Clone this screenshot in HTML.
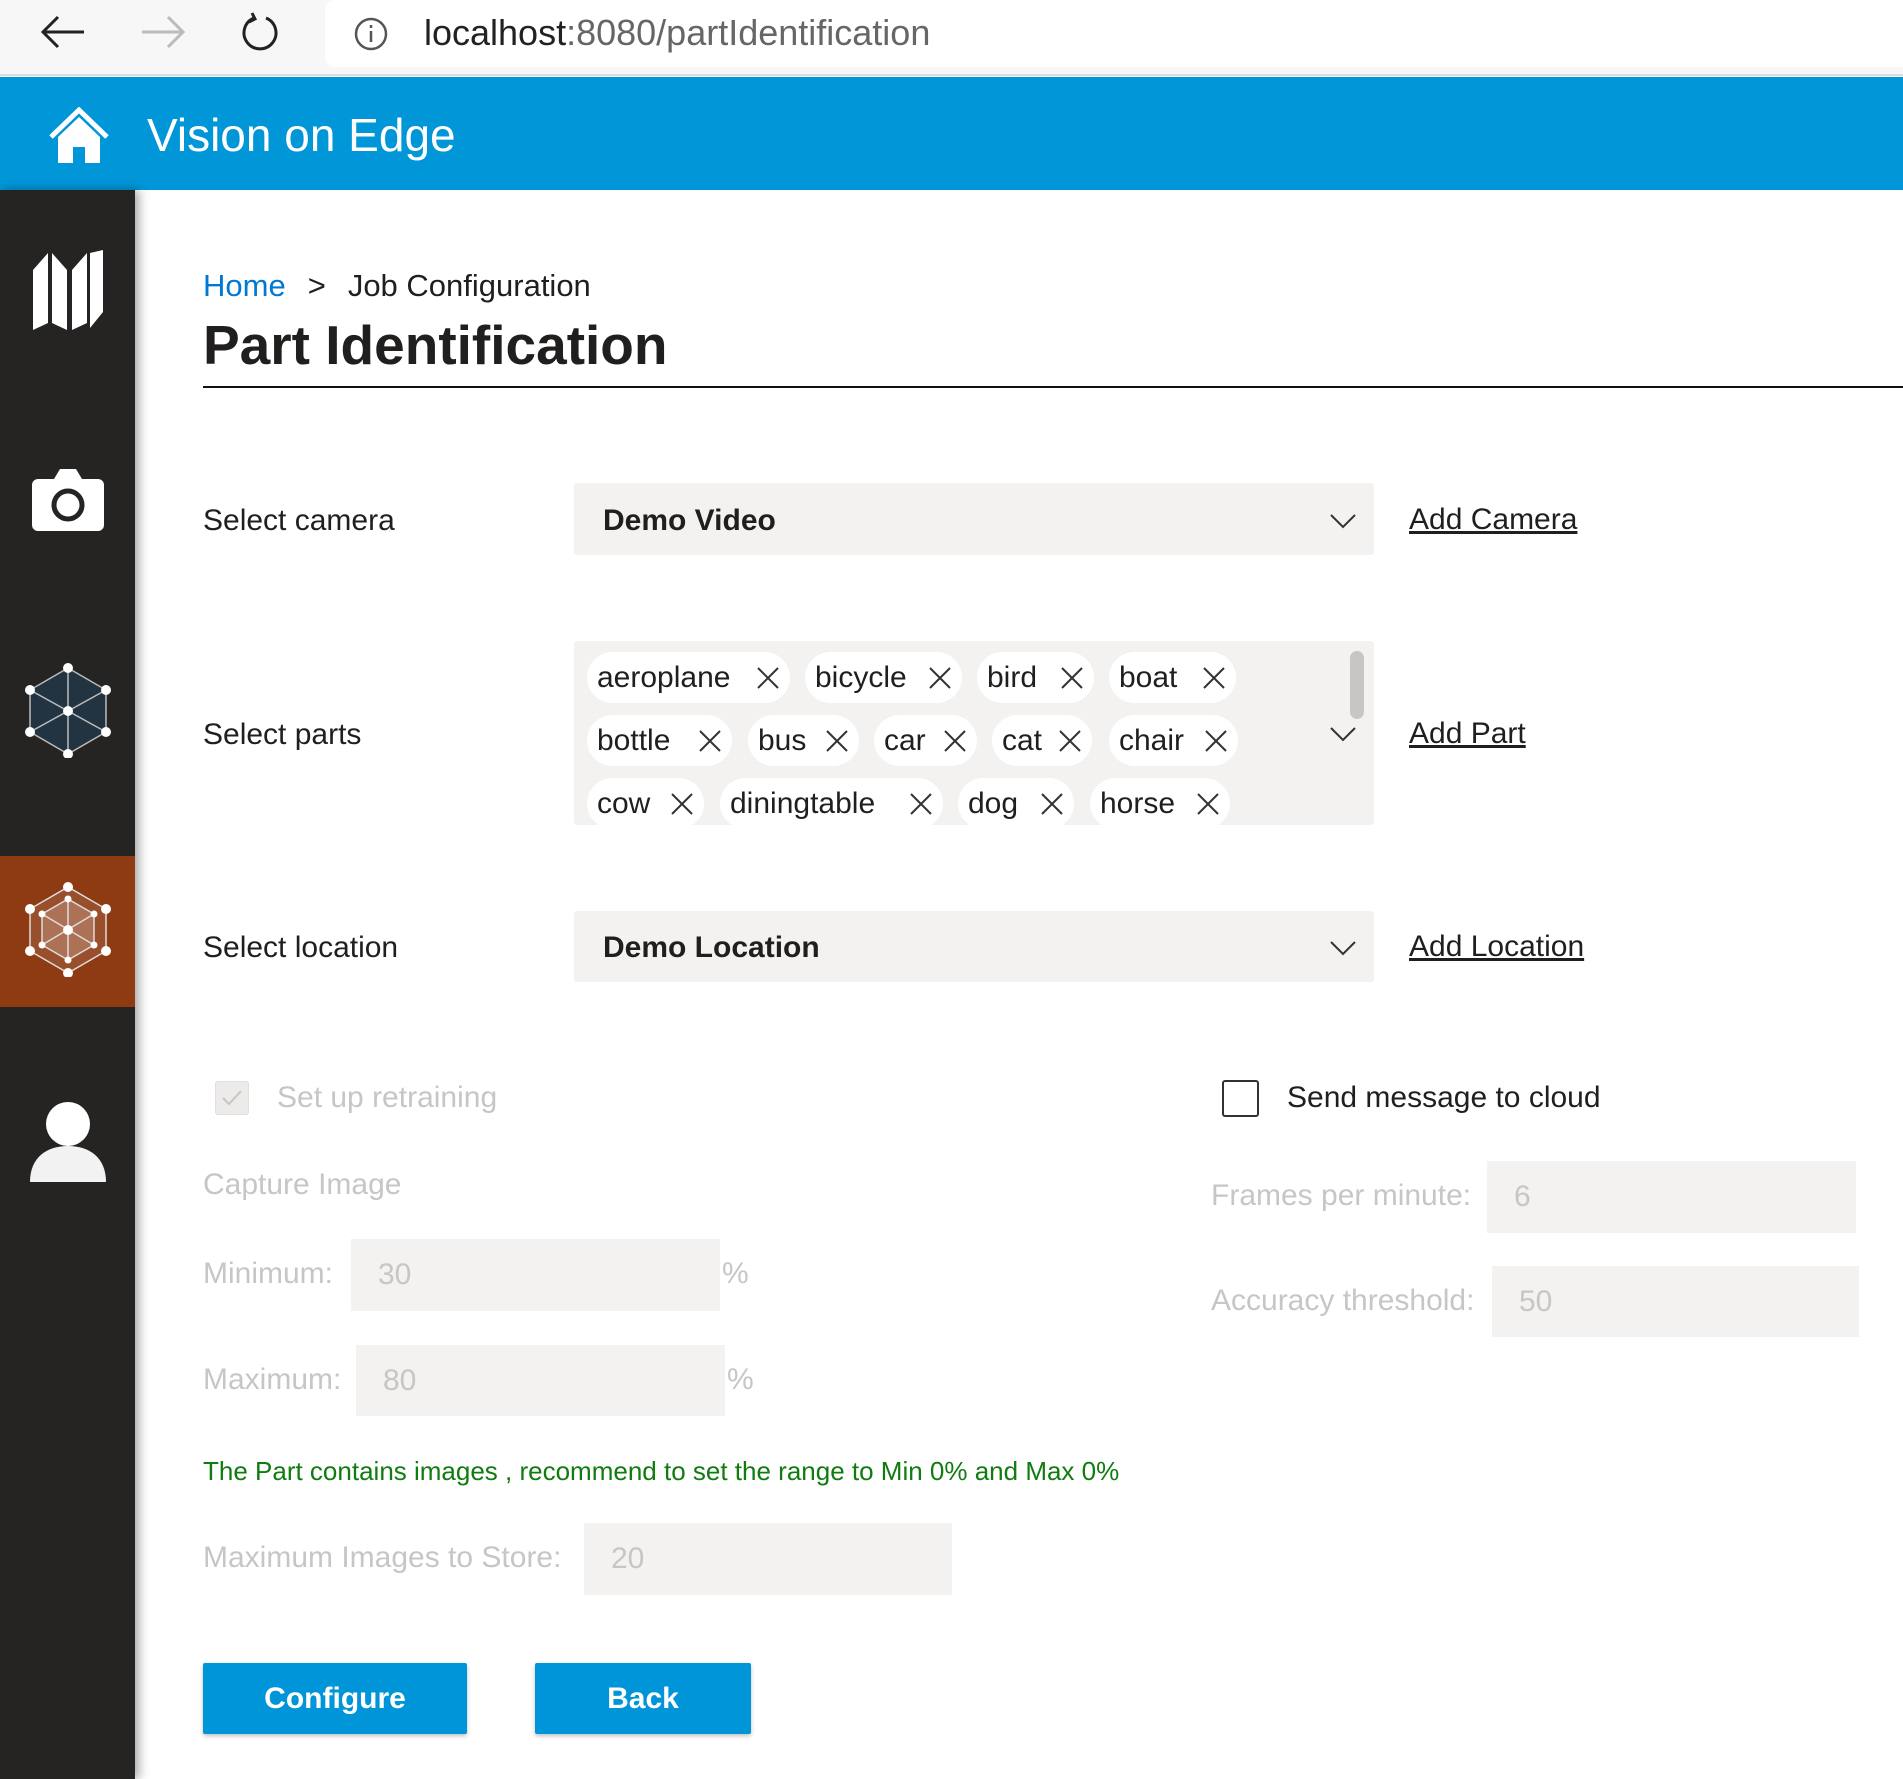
<!DOCTYPE html>
<html><head><meta charset="utf-8"><style>
*{margin:0;padding:0;box-sizing:border-box}
body{width:1903px;height:1779px;overflow:hidden;position:relative;background:#fff;font-family:"Liberation Sans",sans-serif;color:#201f1e}
.abs{position:absolute}
.lbl{position:absolute;font-size:30px;line-height:36px;white-space:nowrap}
.dis{color:#c8c6c4}
.box{position:absolute;background:#f3f2f1;border-radius:3px}
.inp{position:absolute;background:#f3f2f1;font-size:30px;color:#c8c6c4;padding-left:27px;display:flex;align-items:center}
.tag{position:absolute;height:51px;background:#fff;border-radius:26px;display:flex;align-items:center;justify-content:space-between;padding:0 10px 0 10px;font-size:30px;color:#201f1e}
.tag svg{width:24px;height:24px}
.link{position:absolute;font-size:30px;text-decoration:underline;color:#201f1e}
.btn{position:absolute;background:#0094d8;color:#fff;font-weight:bold;font-size:30px;display:flex;align-items:center;justify-content:center;border-radius:2px;box-shadow:0 2px 4px rgba(0,0,0,.25)}
.chev{position:absolute;width:26px;height:16px}
</style></head><body>
<div class="abs" style="left:0;top:0;width:1903px;height:76px;background:#f7f7f7;border-bottom:2px solid #dcdcdc"></div>
<div class="abs" style="left:325px;top:0;width:1578px;height:67px;background:#fff;border-radius:10px 0 0 10px"></div>
<svg class="abs" style="left:40px;top:14px" width="46" height="36" viewBox="0 0 46 36"><path d="M44 18H4M18 3L3 18l15 15" fill="none" stroke="#222" stroke-width="3"/></svg>
<svg class="abs" style="left:140px;top:14px" width="46" height="36" viewBox="0 0 46 36"><path d="M2 18h40M28 3l15 15-15 15" fill="none" stroke="#bbb" stroke-width="3"/></svg>
<svg class="abs" style="left:240px;top:12px" width="40" height="42" viewBox="0 0 40 42"><path d="M14 6A16 16 0 1 0 26 6" fill="none" stroke="#222" stroke-width="3"/><path d="M12 1l3 6-6 3" fill="none" stroke="#222" stroke-width="3"/></svg>
<svg class="abs" style="left:353px;top:16px" width="36" height="36" viewBox="0 0 36 36"><circle cx="18" cy="18" r="15" fill="none" stroke="#555" stroke-width="2.5"/><path d="M18 15v11M18 9v3" stroke="#555" stroke-width="2.5"/></svg>
<div class="abs" style="left:424px;top:12px;font-size:36px;line-height:42px;color:#222">localhost<span style="color:#666">:8080/partIdentification</span></div>
<div class="abs" style="left:0;top:77px;width:1903px;height:113px;background:#0096d8"></div>
<svg class="abs" style="left:48px;top:107px" width="62" height="56" viewBox="0 0 62 56"><path d="M3 30L31 3l28 27" fill="none" stroke="#fff" stroke-width="5"/><path d="M10 30L31 10l21 20v26H37V40H25v16H10z" fill="#fff"/></svg>
<div class="abs" style="left:147px;top:108px;font-size:46px;line-height:54px;color:#fff">Vision on Edge</div>
<div class="abs" style="left:0;top:190px;width:135px;height:1589px;background:#252423;box-shadow:4px 0 10px rgba(0,0,0,.35)"></div>
<div class="abs" style="left:0;top:856px;width:135px;height:151px;background:#8e3b14"></div>
<svg class="abs" style="left:30px;top:250px" width="76" height="82" viewBox="0 0 76 82"><path d="M3 20L18 3v70L3 80z M22 3l15 17v60L22 73z M42 20L57 3v70L42 80z M60 3l13-3v62L60 78z" fill="#fff"/></svg>
<svg class="abs" style="left:30px;top:465px" width="76" height="72" viewBox="0 0 76 72"><path d="M8 14h16l6-10h16l6 10h16a6 6 0 0 1 6 6v40a6 6 0 0 1-6 6H8a6 6 0 0 1-6-6V20a6 6 0 0 1 6-6z" fill="#fff"/><circle cx="38" cy="40" r="14" fill="none" stroke="#252423" stroke-width="5"/></svg>
<svg class="abs" style="left:24px;top:662px" width="88" height="96" viewBox="0 0 88 96"><polygon points="44,6 82,28 82,70 44,92 6,70 6,28" fill="#223441" stroke="#bbb" stroke-width="1.5"/><path d="M44 6V49M6 28L44 49 82 28M6 70L44 49 82 70M44 49V92" fill="none" stroke="#bbb" stroke-width="1.5"/><g fill="#fff"><circle cx="44" cy="6" r="5"/><circle cx="82" cy="28" r="5"/><circle cx="82" cy="70" r="5"/><circle cx="44" cy="92" r="5"/><circle cx="6" cy="70" r="5"/><circle cx="6" cy="28" r="5"/><circle cx="44" cy="49" r="5"/></g></svg>
<svg class="abs" style="left:24px;top:881px" width="88" height="96" viewBox="0 0 88 96"><polygon points="44,6 82,28 82,70 44,92 6,70 6,28" fill="rgba(255,255,255,.1)" stroke="#ddd" stroke-width="1.5"/><polygon points="44,18 70,33 70,64 44,79 18,64 18,33" fill="rgba(255,255,255,.2)" stroke="#ddd" stroke-width="1.5"/><path d="M44 18V79M18 33L70 64M70 33L18 64" fill="none" stroke="#ddd" stroke-width="1.5"/><g fill="#fff"><circle cx="44" cy="6" r="5"/><circle cx="82" cy="28" r="5"/><circle cx="82" cy="70" r="5"/><circle cx="44" cy="92" r="5"/><circle cx="6" cy="70" r="5"/><circle cx="6" cy="28" r="5"/><circle cx="44" cy="49" r="5"/><circle cx="44" cy="18" r="3.5"/><circle cx="70" cy="33" r="3.5"/><circle cx="70" cy="64" r="3.5"/><circle cx="44" cy="79" r="3.5"/><circle cx="18" cy="64" r="3.5"/><circle cx="18" cy="33" r="3.5"/></g></svg>
<svg class="abs" style="left:28px;top:1100px" width="80" height="86" viewBox="0 0 80 86"><circle cx="40" cy="24" r="22" fill="#fff"/><path d="M2 82C2 58 18 46 40 46s38 12 38 36z" fill="#f2f2f2"/></svg>
<div class="abs" style="left:203px;top:267px;font-size:31px;line-height:38px"><span style="color:#0078d4">Home</span><span style="margin:0 22px">&gt;</span>Job Configuration</div>
<div class="abs" style="left:203px;top:312px;font-size:55px;line-height:66px;font-weight:bold;color:#201f1e">Part Identification</div>
<div class="abs" style="left:203px;top:386px;width:1700px;height:2px;background:#111"></div>

<div class="lbl" style="left:203px;top:503px">Select camera</div>
<div class="box" style="left:574px;top:483px;width:800px;height:72px"></div>
<div class="lbl" style="left:603px;top:503px;font-weight:bold">Demo Video</div>
<svg class="chev" style="left:1330px;top:513px" viewBox="0 0 26 16"><path d="M1 2l12 12L25 2" fill="none" stroke="#333" stroke-width="2"/></svg>
<div class="link" style="left:1409px;top:503px">Add Camera</div>

<div class="lbl" style="left:203px;top:717px">Select parts</div>
<div class="box" style="left:574px;top:641px;width:800px;height:184px;overflow:hidden">
<div class="tag" style="left:13px;top:11px;width:203px">aeroplane<svg viewBox="0 0 24 24"><path d="M2 2l20 20M22 2L2 22" stroke="#333" stroke-width="2"/></svg></div>
<div class="tag" style="left:231px;top:11px;width:157px">bicycle<svg viewBox="0 0 24 24"><path d="M2 2l20 20M22 2L2 22" stroke="#333" stroke-width="2"/></svg></div>
<div class="tag" style="left:403px;top:11px;width:117px">bird<svg viewBox="0 0 24 24"><path d="M2 2l20 20M22 2L2 22" stroke="#333" stroke-width="2"/></svg></div>
<div class="tag" style="left:535px;top:11px;width:127px">boat<svg viewBox="0 0 24 24"><path d="M2 2l20 20M22 2L2 22" stroke="#333" stroke-width="2"/></svg></div>
<div class="tag" style="left:13px;top:74px;width:145px">bottle<svg viewBox="0 0 24 24"><path d="M2 2l20 20M22 2L2 22" stroke="#333" stroke-width="2"/></svg></div>
<div class="tag" style="left:174px;top:74px;width:111px">bus<svg viewBox="0 0 24 24"><path d="M2 2l20 20M22 2L2 22" stroke="#333" stroke-width="2"/></svg></div>
<div class="tag" style="left:300px;top:74px;width:103px">car<svg viewBox="0 0 24 24"><path d="M2 2l20 20M22 2L2 22" stroke="#333" stroke-width="2"/></svg></div>
<div class="tag" style="left:418px;top:74px;width:100px">cat<svg viewBox="0 0 24 24"><path d="M2 2l20 20M22 2L2 22" stroke="#333" stroke-width="2"/></svg></div>
<div class="tag" style="left:535px;top:74px;width:129px">chair<svg viewBox="0 0 24 24"><path d="M2 2l20 20M22 2L2 22" stroke="#333" stroke-width="2"/></svg></div>
<div class="tag" style="left:13px;top:137px;width:117px">cow<svg viewBox="0 0 24 24"><path d="M2 2l20 20M22 2L2 22" stroke="#333" stroke-width="2"/></svg></div>
<div class="tag" style="left:146px;top:137px;width:223px">diningtable<svg viewBox="0 0 24 24"><path d="M2 2l20 20M22 2L2 22" stroke="#333" stroke-width="2"/></svg></div>
<div class="tag" style="left:384px;top:137px;width:116px">dog<svg viewBox="0 0 24 24"><path d="M2 2l20 20M22 2L2 22" stroke="#333" stroke-width="2"/></svg></div>
<div class="tag" style="left:516px;top:137px;width:140px">horse<svg viewBox="0 0 24 24"><path d="M2 2l20 20M22 2L2 22" stroke="#333" stroke-width="2"/></svg></div>
<div class="abs" style="left:776px;top:10px;width:14px;height:68px;background:#c8c6c4;border-radius:7px"></div>
</div>
<svg class="chev" style="left:1330px;top:726px" viewBox="0 0 26 16"><path d="M1 2l12 12L25 2" fill="none" stroke="#333" stroke-width="2"/></svg>
<div class="link" style="left:1409px;top:717px">Add Part</div>

<div class="lbl" style="left:203px;top:930px">Select location</div>
<div class="box" style="left:574px;top:911px;width:800px;height:71px"></div>
<div class="lbl" style="left:603px;top:930px;font-weight:bold">Demo Location</div>
<svg class="chev" style="left:1330px;top:940px" viewBox="0 0 26 16"><path d="M1 2l12 12L25 2" fill="none" stroke="#333" stroke-width="2"/></svg>
<div class="link" style="left:1409px;top:930px">Add Location</div>

<div class="abs" style="left:215px;top:1081px;width:34px;height:34px;background:#edebe9;border:1px solid #e1dfdd;border-radius:3px"></div>
<svg class="abs" style="left:221px;top:1088px" width="22" height="20" viewBox="0 0 22 20"><path d="M2 10l6 6L20 3" fill="none" stroke="#c8c6c4" stroke-width="2"/></svg>
<div class="lbl dis" style="left:277px;top:1080px">Set up retraining</div>
<div class="abs" style="left:1222px;top:1080px;width:37px;height:37px;border:2px solid #323130;border-radius:3px"></div>
<div class="lbl" style="left:1287px;top:1080px">Send message to cloud</div>

<div class="lbl dis" style="left:203px;top:1167px">Capture Image</div>
<div class="lbl dis" style="left:203px;top:1256px">Minimum:</div>
<div class="inp" style="left:351px;top:1239px;width:369px;height:72px">30</div>
<div class="lbl dis" style="left:722px;top:1256px">%</div>
<div class="lbl dis" style="left:203px;top:1362px">Maximum:</div>
<div class="inp" style="left:356px;top:1345px;width:369px;height:71px">80</div>
<div class="lbl dis" style="left:727px;top:1362px">%</div>

<div class="lbl dis" style="left:1211px;top:1178px">Frames per minute:</div>
<div class="inp" style="left:1487px;top:1161px;width:369px;height:72px">6</div>
<div class="lbl dis" style="left:1211px;top:1283px">Accuracy threshold:</div>
<div class="inp" style="left:1492px;top:1266px;width:367px;height:71px">50</div>

<div class="abs" style="left:203px;top:1455px;font-size:26px;line-height:32px;color:#107c10;white-space:nowrap">The Part contains images , recommend to set the range to Min 0% and Max 0%</div>
<div class="lbl dis" style="left:203px;top:1540px">Maximum Images to Store:</div>
<div class="inp" style="left:584px;top:1523px;width:368px;height:72px">20</div>

<div class="btn" style="left:203px;top:1663px;width:264px;height:71px">Configure</div>
<div class="btn" style="left:535px;top:1663px;width:216px;height:71px">Back</div>
</body></html>
